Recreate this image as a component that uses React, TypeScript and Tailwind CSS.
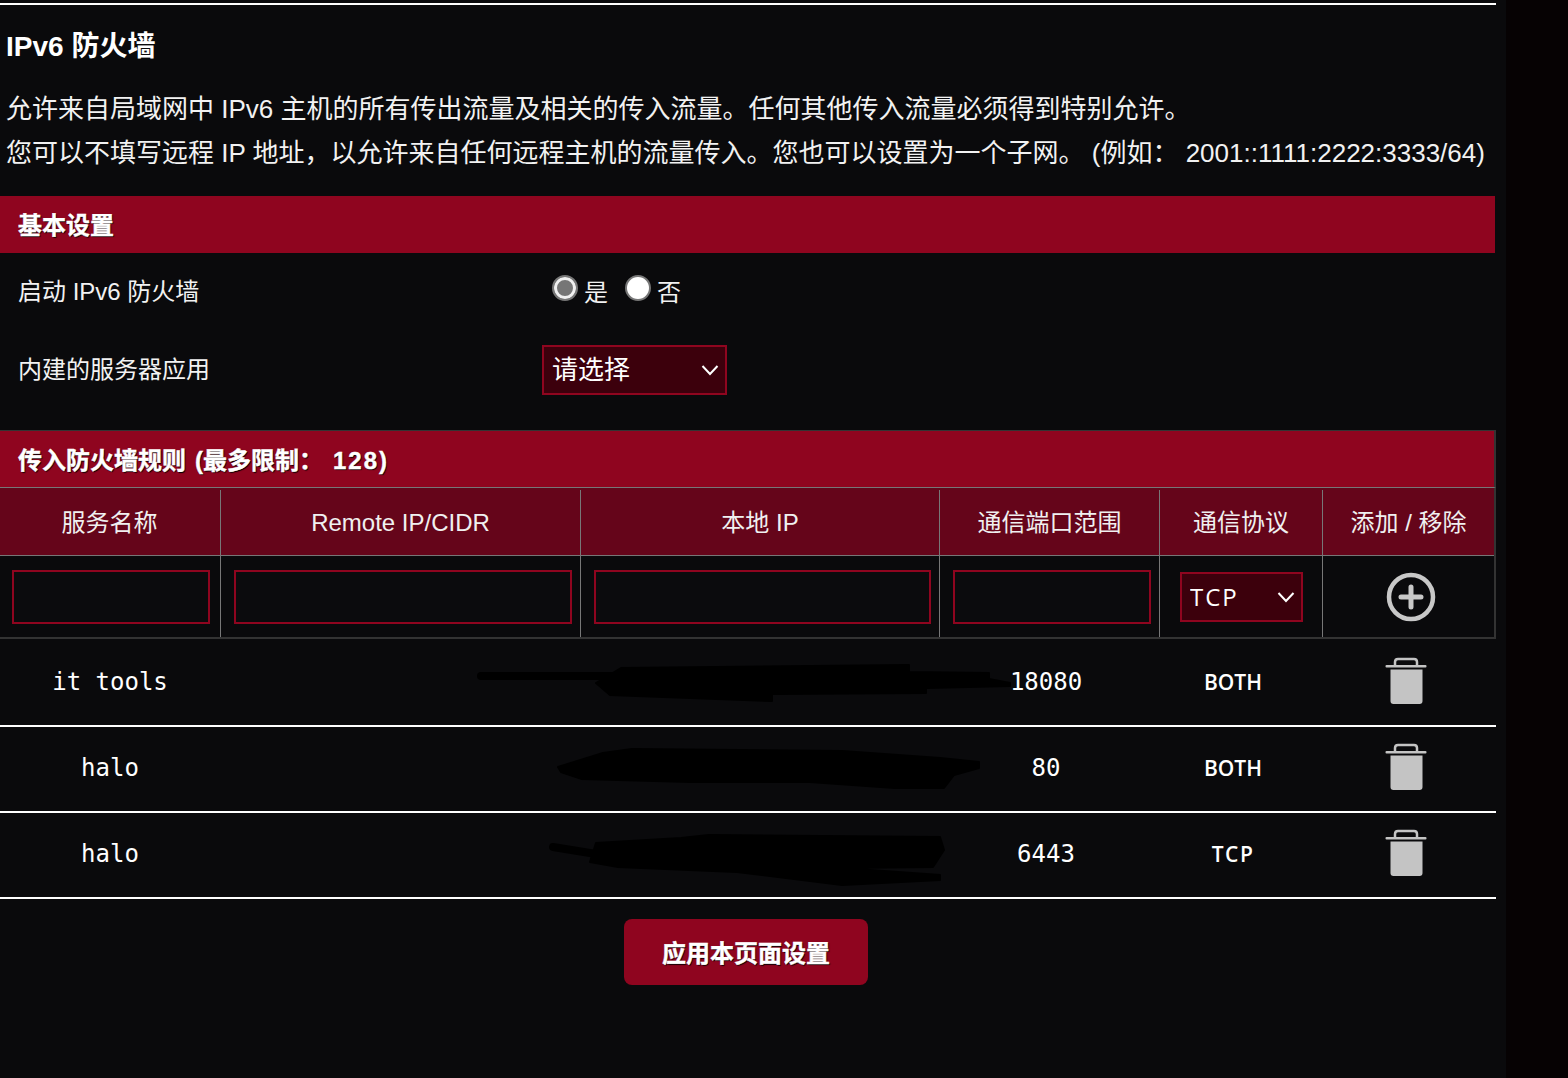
const sans = "font-['Liberation_Sans','Noto_Sans_CJK_SC',sans-serif]"

const rules = [
  { name: 'it tools', port: '18080', proto: 'BOTH', scribble: 0 },
  { name: 'halo', port: '80', proto: 'BOTH', scribble: 1 },
  { name: 'halo', port: '6443', proto: 'TCP', scribble: 2 },
]

// hand-drawn redaction marks over the IP columns
const scribbles = [
  <g key="0" fill="#000" stroke="#000" strokeLinecap="round" strokeLinejoin="round">
    <path d="M4 15 H145" strokeWidth="8" fill="none" />
    <path d="M144 7 L432 4 L432 11 L512 12 L512 18 L533 22 L533 25 L449 27 L449 32 L295 33 L295 40 L133 34 L119 22 Z" strokeWidth="2" />
  </g>,
  <g key="1" fill="#000" stroke="#000" strokeLinejoin="round">
    <path d="M81 20 L126 6 L155 2 L365 4 L463 11 L502 15 L502 21 L477 28 L467 41 L418 41 L333 35 L214 35 L105 32 L84 25 Z" strokeWidth="2" />
  </g>,
  <g key="2" fill="#000" stroke="#000" strokeLinecap="round" strokeLinejoin="round">
    <path d="M76 14 L119 21" strokeWidth="8" fill="none" />
    <path d="M119 10 L204 5 L232 2 L463 4 L467 17 L456 34 L365 35 L463 42 L463 47 L365 52 L260 39 L141 34 L113 29 Z" strokeWidth="2" />
  </g>,
]

function Chevron() {
  return (
    <svg viewBox="0 0 18 12" className="pointer-events-none absolute right-[8px] top-1/2 h-3 w-[18px] -translate-y-1/2" fill="none" stroke="#fff" strokeWidth="2">
      <path d="M1.5 2 L9 10 L16.5 2" />
    </svg>
  )
}

function Radio({ checked, label }: { checked?: boolean; label: string }) {
  return (
    <label className="flex items-start">
      <input
        type="radio"
        name="fw"
        defaultChecked={checked}
        className={`mt-[-1px] h-[26px] w-[26px] appearance-none rounded-full border-2 border-[#767676] ${checked ? 'bg-[#767676] shadow-[inset_0_0_0_3px_#f0f0f0]' : 'bg-white'}`}
      />
      <span className="ml-[6px] mt-[2px] text-2xl leading-[30px]">{label}</span>
    </label>
  )
}

function SectionHead({ children, border }: { children: React.ReactNode; border?: boolean }) {
  return (
    <div className={`flex items-center bg-[#8f051f] pl-[18px] text-2xl font-bold text-white [-webkit-text-stroke:0.4px_#fff] [text-shadow:1px_1px_1px_#000] ${border ? 'h-[58px] border-t border-t-[#333] border-b border-b-[#777] border-r-2 border-r-[#333] pt-[3px]' : 'h-[57px] pt-[2px]'}`}>
      {children}
    </div>
  )
}

function TextBox({ className }: { className?: string }) {
  return <input className={`h-[54px] border-2 border-[#8f051f] bg-[#0b0b0d] ${className ?? ''}`} />
}

function TrashIcon() {
  return (
    <svg viewBox="0 0 42 48" className="mb-1 h-12 w-[42px]" fill="#c4c4c4">
      <path d="M10 9 V5 Q10 2 13 2 H29 Q32 2 32 5 V9" fill="none" stroke="#c4c4c4" strokeWidth="2.5" />
      <rect x="0.5" y="8" width="41" height="2.5" rx="1" />
      <path d="M5.5 12.5 H37.5 V44 Q37.5 47 34.5 47 H8.5 Q5.5 47 5.5 44 Z" />
    </svg>
  )
}

export default function App() {
  return (
    <div className={`relative h-[1078px] w-full overflow-hidden bg-[#0a0a0c] text-[#f2f2f2] ${sans}`}>
      <div className="absolute inset-y-0 left-[1506px] right-0 bg-[#060203]" />

      <div className="relative w-[1496px] pt-[3px]">
        <div className="h-[2px] bg-white" />
        <div className="pl-[6px] pt-[26px] text-[28px] font-bold leading-8 text-white">IPv6 防火墙</div>
        <div className="pl-[6px] pt-[24px] text-[26px] leading-[44px]">
          <p>允许来自局域网中 IPv6 主机的所有传出流量及相关的传入流量。任何其他传入流量必须得到特别允许。</p>
          <p className="whitespace-pre">您可以不填写远程 IP 地址，以允许来自任何远程主机的流量传入。您也可以设置为一个子网。 (例如： 2001::1111:2222:3333/64)</p>
        </div>

        <div className="mt-[21px] w-[1495px]">
          <SectionHead>基本设置</SectionHead>
        </div>
        <div className="flex h-[77px] items-center pl-[18px] text-2xl">
          <div className="w-[534px]">启动 IPv6 防火墙</div>
          <div className="flex gap-[17px] text-2xl">
            <Radio checked label="是" />
            <Radio label="否" />
          </div>
        </div>
        <div className="flex h-[80px] items-center pl-[18px] text-2xl">
          <div className="w-[524px]">内建的服务器应用</div>
          <div className="relative h-[50px] w-[185px]">
            <select className="h-full w-full appearance-none border-2 border-[#8f051f] bg-[#3c000c] pl-[8px] text-[26px] text-white">
              <option>请选择</option>
            </select>
            <Chevron />
          </div>
        </div>

        <div className="mt-[20px]">
          <SectionHead border>
            <span>传入防火墙规则<span className="ml-[9px]">(最多限制：</span><span className="ml-[10px] tracking-[2px]">128)</span></span>
          </SectionHead>
          <div className="border-b-2 border-r-2 border-[#333]">
            <div className="grid grid-cols-[221px_360px_359px_220px_163px_171px] bg-[#65051a] pt-[2px] text-center text-2xl leading-[65px] text-[#f0f0f0]">
              <div className="border-r border-[#777] pr-px">服务名称</div>
              <div className="border-r border-[#777]">Remote IP/CIDR</div>
              <div className="border-r border-[#777]">本地 IP</div>
              <div className="border-r border-[#777]">通信端口范围</div>
              <div className="border-r border-[#777]">通信协议</div>
              <div>添加 / 移除</div>
            </div>
            <div className="grid h-[82px] grid-cols-[221px_360px_359px_220px_163px_171px] items-stretch border-t border-[#777]">
              <div className="flex items-center justify-center border-r border-[#777] pl-[2px]"><TextBox className="w-[198px]" /></div>
              <div className="flex items-center justify-center border-r border-[#777] pl-[5px]"><TextBox className="w-[338px]" /></div>
              <div className="flex items-center justify-center border-r border-[#777] pl-[5px]"><TextBox className="w-[337px]" /></div>
              <div className="flex items-center justify-center border-r border-[#777] pl-[5px]"><TextBox className="w-[198px]" /></div>
              <div className="flex items-center justify-center border-r border-[#777] pl-px">
                <div className="relative h-[50px] w-[123px]">
                  <select className="h-full w-full appearance-none border-2 border-[#8f051f] bg-[#3c000c] pl-[8px] font-['Open_Sans',sans-serif] text-2xl font-medium tracking-[2px] text-white">
                    <option>TCP</option>
                  </select>
                  <Chevron />
                </div>
              </div>
              <div className="flex items-center justify-center pl-[5px] pt-px">
                <svg viewBox="0 0 50 50" className="h-[50px] w-[50px]" fill="none" stroke="#c8c8c8">
                  <circle cx="25" cy="25" r="22" strokeWidth="4.5" />
                  <path d="M25 15 V35 M15 25 H35" strokeWidth="5" strokeLinecap="round" />
                </svg>
              </div>
            </div>
          </div>
        </div>

        <div className="pt-[2px]">
          {rules.map((rule, i) => (
            <div key={i} className="grid h-[86px] grid-cols-[220px_365px_366px_190px_184px_162px] items-center border-b-2 border-white text-center text-white">
              <div className="pb-[2px] font-['DejaVu_Sans_Mono',monospace] text-2xl">{rule.name}</div>
              <div className="relative col-span-2 h-full">
                <svg viewBox="0 0 540 60" className="absolute left-[257px] top-[20px] h-[60px] w-[540px]">
                  {scribbles[rule.scribble]}
                </svg>
              </div>
              <div className="pb-[2px] font-['DejaVu_Sans_Mono',monospace] text-2xl">{rule.port}</div>
              <div className={`font-['Open_Sans',sans-serif] text-[21px] font-semibold ${rule.proto === 'TCP' ? 'tracking-[1.5px]' : ''}`}>{rule.proto}</div>
              <div className="flex justify-center"><TrashIcon /></div>
            </div>
          ))}
        </div>

        <div className="flex justify-center pt-[20px] pr-[4px]">
          <button className="h-[66px] w-[244px] rounded-lg bg-[#8f051f] pt-[4px] text-2xl font-bold text-white [-webkit-text-stroke:0.4px_#fff] [text-shadow:1px_1px_1px_#000]">应用本页面设置</button>
        </div>
      </div>
    </div>
  )
}
